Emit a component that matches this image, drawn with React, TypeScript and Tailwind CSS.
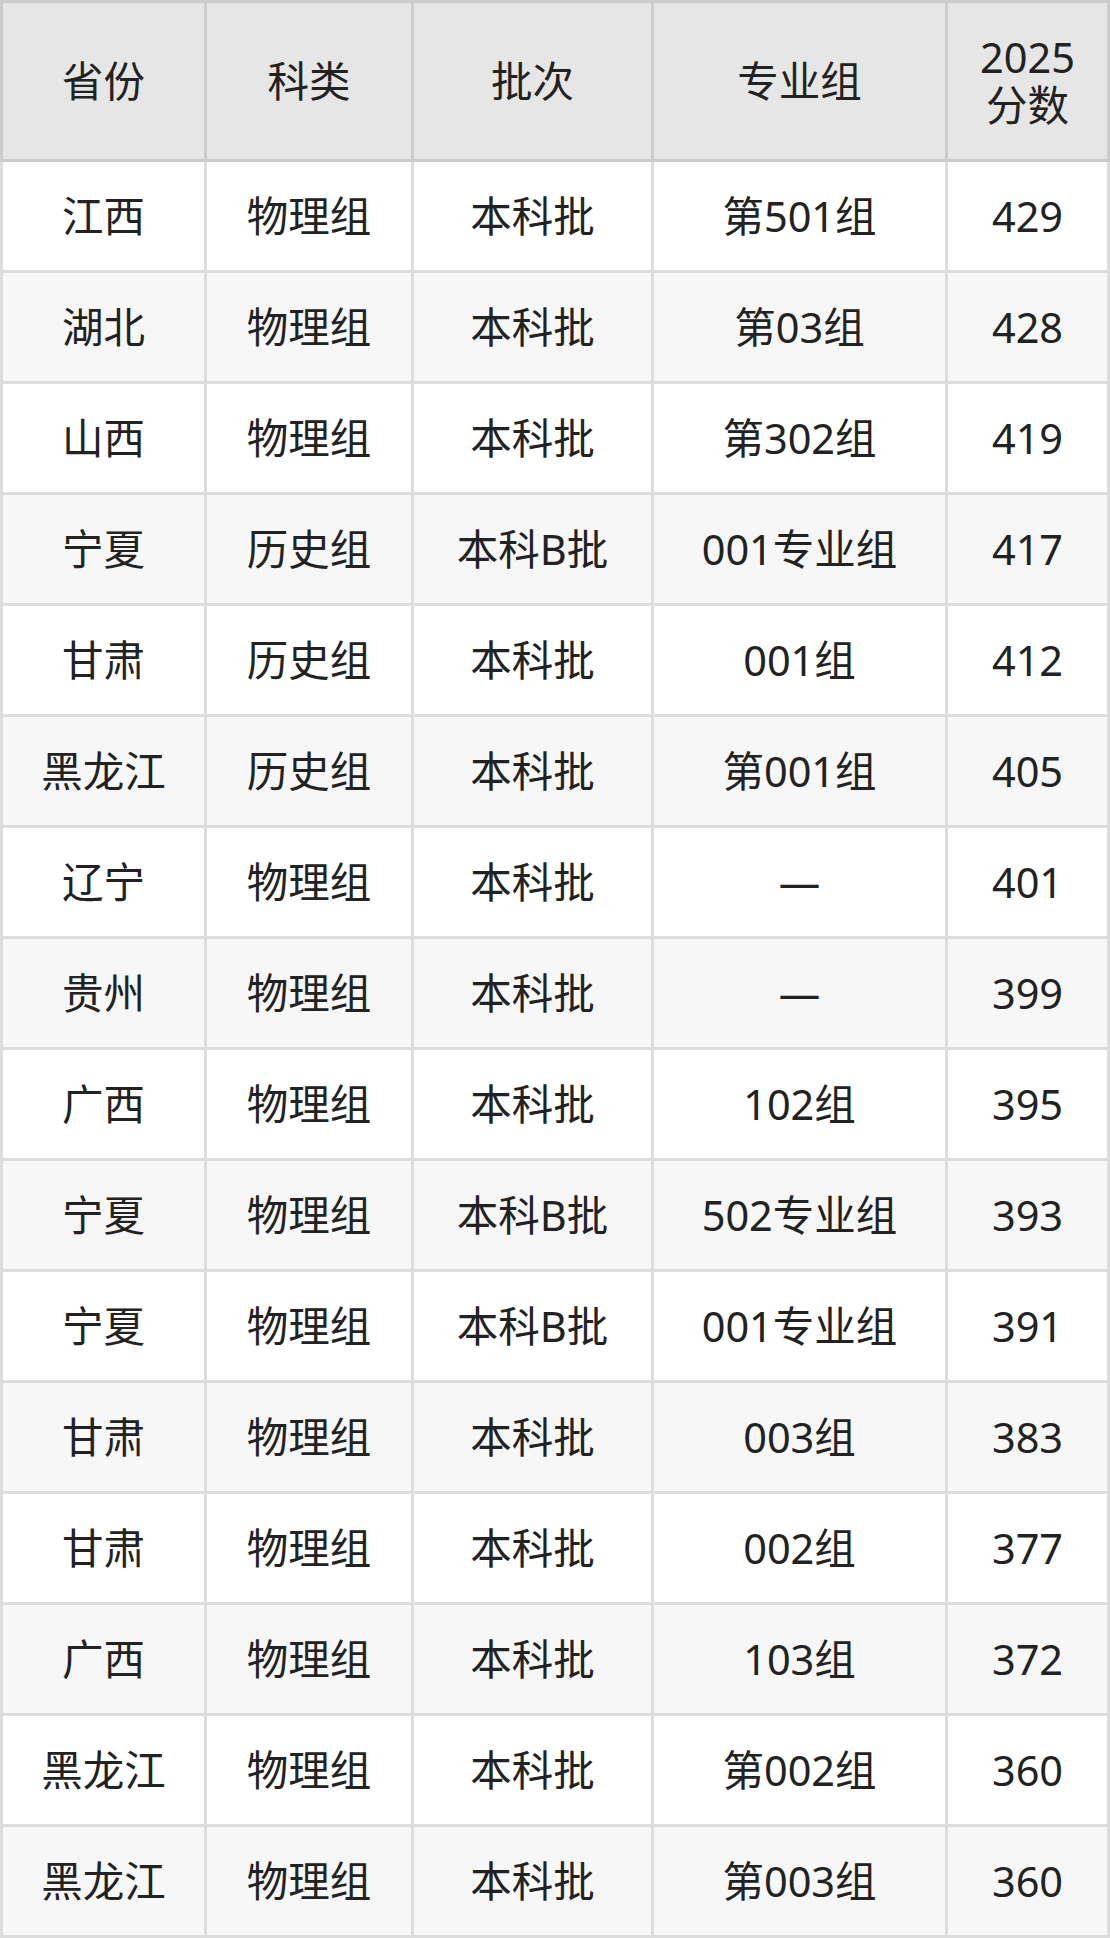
const rows: string[][] = [
  ["江西", "物理组", "本科批", "第501组", "429"],
  ["湖北", "物理组", "本科批", "第03组", "428"],
  ["山西", "物理组", "本科批", "第302组", "419"],
  ["宁夏", "历史组", "本科B批", "001专业组", "417"],
  ["甘肃", "历史组", "本科批", "001组", "412"],
  ["黑龙江", "历史组", "本科批", "第001组", "405"],
  ["辽宁", "物理组", "本科批", "—", "401"],
  ["贵州", "物理组", "本科批", "—", "399"],
  ["广西", "物理组", "本科批", "102组", "395"],
  ["宁夏", "物理组", "本科B批", "502专业组", "393"],
  ["宁夏", "物理组", "本科B批", "001专业组", "391"],
  ["甘肃", "物理组", "本科批", "003组", "383"],
  ["甘肃", "物理组", "本科批", "002组", "377"],
  ["广西", "物理组", "本科批", "103组", "372"],
  ["黑龙江", "物理组", "本科批", "第002组", "360"],
  ["黑龙江", "物理组", "本科批", "第003组", "360"],
]

const cols = "grid grid-cols-[201px_204px_237px_291px_159px] gap-[3px]"

export default function App() {
  return (
    <div
      className="w-[1110px] text-[41.5px] leading-[48px] text-[#222]"
      style={{ fontFamily: '"Noto Sans", "Noto Sans CJK SC", sans-serif' }}
    >
      <div className={`${cols} bg-[#cccccc] p-[3px]`}>
        {["省份", "科类", "批次", "专业组"].map((h) => (
          <div key={h} className="h-[156px] bg-[#e6e6e6] flex items-center justify-center text-center">
            {h}
          </div>
        ))}
        <div className="h-[156px] bg-[#e6e6e6] flex flex-col items-center justify-center text-center">
          <span>2025</span>
          <span>分数</span>
        </div>
      </div>
      <div className={`${cols} bg-[#dddddd] px-[3px] pb-[3px]`}>
        {rows.map((r, i) =>
          r.map((c, j) => (
            <div
              key={`${i}-${j}`}
              className={`h-[108px] flex items-center justify-center text-center ${i % 2 === 0 ? "bg-white" : "bg-[#f7f7f7]"}`}
            >
              {c}
            </div>
          ))
        )}
      </div>
    </div>
  )
}
